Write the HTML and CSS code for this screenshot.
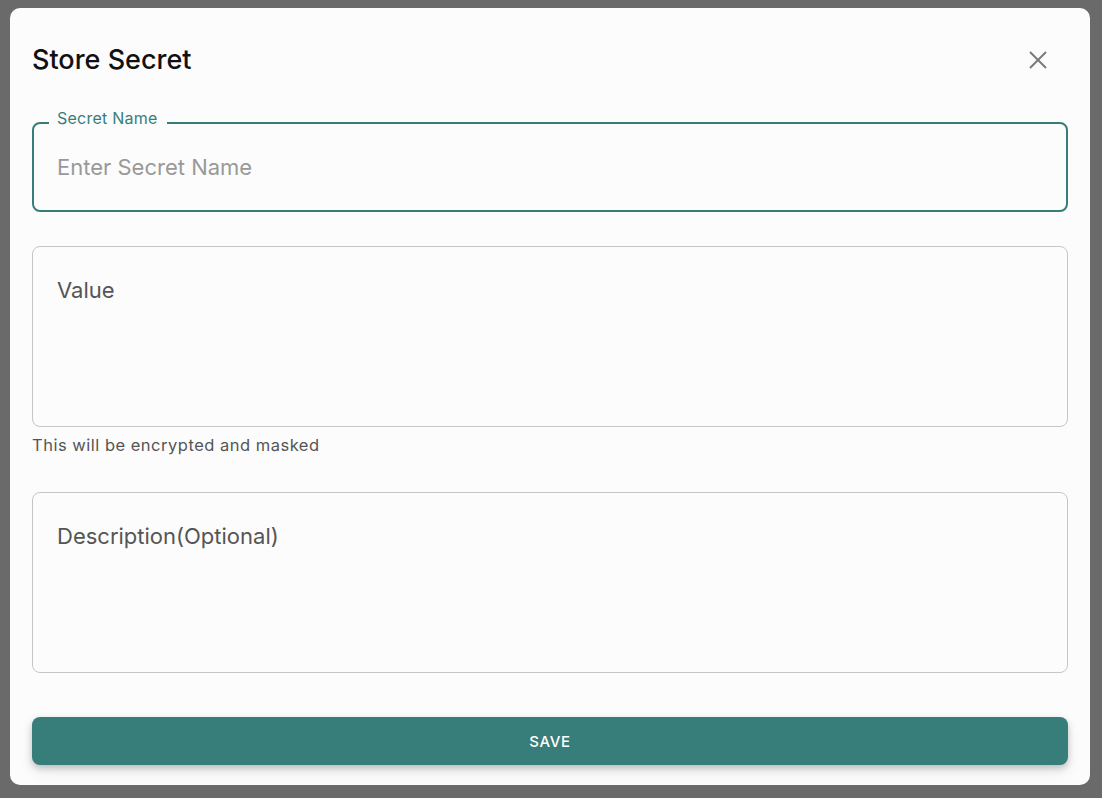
FILE: index.html
```html
<!DOCTYPE html>
<html lang="en">
<head>
  <meta charset="UTF-8">
  <title>Store Secret</title>
  <link rel="stylesheet" href="styles.css">
</head>
<body>
  <div class="dialog">
    <div class="dialog-header">
      <h2>Store Secret</h2>
      <button class="close-btn" aria-label="Close">
        <svg width="18" height="18" viewBox="0 0 18 18">
          <path d="M1 1 L17 17 M17 1 L1 17" stroke="currentColor" stroke-width="2" />
        </svg>
      </button>
    </div>

    <!-- Secret name (focused) -->
    <div class="field focused">
      <label class="field-label">Secret Name</label>
      <input class="field-input" placeholder="Enter Secret Name" />
    </div>

    <!-- Value -->
    <div class="field area">
      <textarea class="field-area" placeholder="Value"></textarea>
    </div>
    <p class="helper">This will be encrypted and masked</p>

    <!-- Description -->
    <div class="field area desc">
      <textarea class="field-area" placeholder="Description(Optional)"></textarea>
    </div>

    <button class="save-btn">Save</button>
  </div>
</body>
</html>
```

FILE: styles.css
```css
:root {
  --teal: #377e7b;
  --backdrop: #6a6a6a;
  --paper: #fcfcfc;
  --line: #c6c6c6;
  --text-muted: #555;
}

* {
  box-sizing: border-box;
}

body {
  margin: 0;
  padding: 8px 12px 0 10px;
  background: var(--backdrop);
  font-family: Inter, 'Noto Sans', sans-serif;
}

.dialog {
  width: 1080px;
  height: 777px;
  background: var(--paper);
  border-radius: 10px;
  padding: 36px 22px 20px 22px;
}

.dialog-header {
  display: flex;
  align-items: center;
  justify-content: space-between;
  height: 32px;
  margin-bottom: 46px;
}

.dialog-header h2 {
  margin: 0;
  font-size: 27px;
  font-weight: 500;
  color: #111;
  line-height: 32px;
}

.close-btn {
  width: 36px;
  height: 36px;
  margin-right: 12px;
  border: none;
  background: none;
  color: #7b7b7b;
  display: flex;
  align-items: center;
  justify-content: center;
  padding: 0;
  cursor: pointer;
}

.field {
  position: relative;
  border: 1px solid var(--line);
  border-radius: 8px;
}

.field.focused {
  border: 2px solid var(--teal);
  height: 90px;
}

.field-label {
  position: absolute;
  top: -15px;
  left: 15px;
  padding: 0 9px 0 8px;
  background: var(--paper);
  color: var(--teal);
  font-size: 16px;
  line-height: 18px;
  letter-spacing: 0.25px;
}

.field-input {
  width: 100%;
  height: 100%;
  border: none;
  outline: none;
  background: transparent;
  padding: 0 23px;
  font-family: inherit;
  font-size: 22px;
  color: #222;
}

.field-input::placeholder {
  color: #999;
}

.field.area {
  margin-top: 34px;
  height: 181px;
}

.field.desc {
  margin-top: 36px;
}

.field-area {
  width: 100%;
  height: 100%;
  border: none;
  outline: none;
  resize: none;
  background: transparent;
  padding: 30px 24px;
  font-family: inherit;
  font-size: 22px;
  line-height: 26px;
  color: #222;
}

.field-area::placeholder {
  color: var(--text-muted);
}

.helper {
  margin: 8px 0 0 0;
  font-size: 16.5px;
  line-height: 21px;
  letter-spacing: 0.5px;
  color: var(--text-muted);
}

.save-btn {
  display: block;
  width: 100%;
  height: 48px;
  margin-top: 44px;
  border: none;
  border-radius: 8px;
  background: var(--teal);
  color: #fff;
  font-family: inherit;
  font-size: 15px;
  font-weight: 500;
  letter-spacing: 0.6px;
  text-transform: uppercase;
  box-shadow: 0 3px 6px rgba(0, 0, 0, 0.18), 0 6px 14px rgba(0, 0, 0, 0.1);
  cursor: pointer;
}
```
